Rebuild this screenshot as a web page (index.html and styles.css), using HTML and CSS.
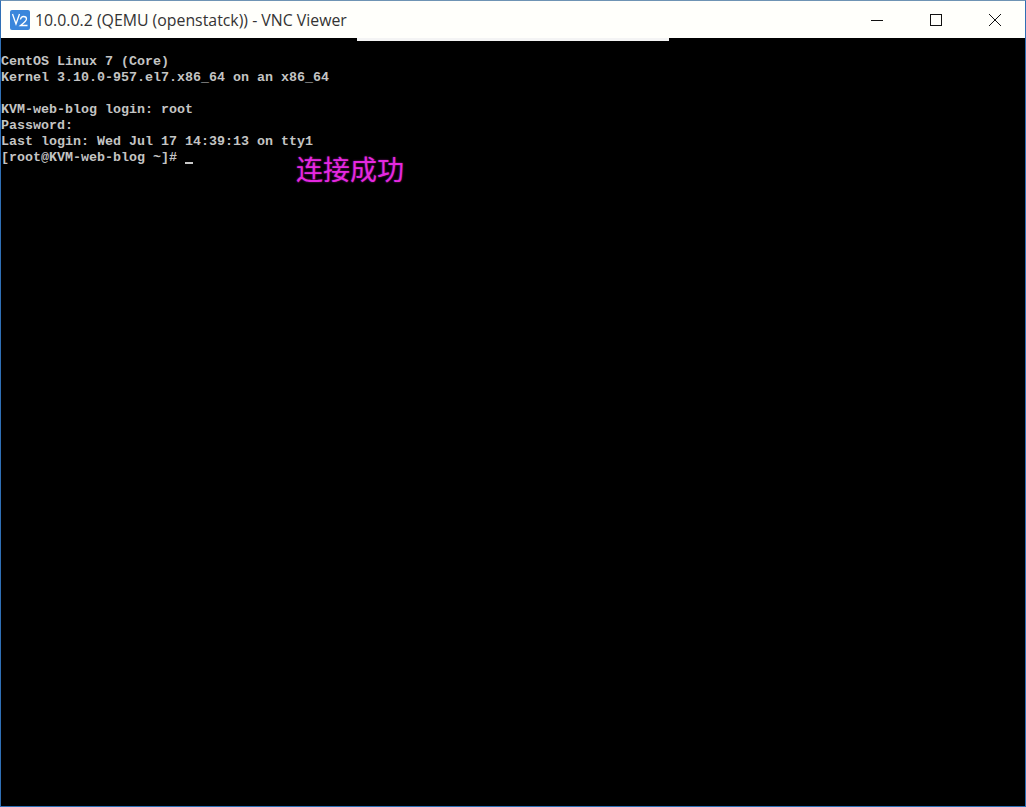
FILE: index.html
```html
<!DOCTYPE html>
<html lang="zh">
<head>
<meta charset="utf-8">
<title>VNC Viewer</title>
<link rel="stylesheet" href="styles.css">
</head>
<body>
<div class="window">
  <header class="titlebar">
    <svg class="app-icon" width="20" height="20" viewBox="0 0 20 20" aria-hidden="true">
      <rect width="20" height="20" rx="2" fill="#3a86dc"/>
      <path d="M2.5 4 L6 14 L9.5 4" fill="none" stroke="#fff" stroke-width="1.3"/>
      <path d="M10.5 9.5 Q11 6.5 13.5 6.5 Q16.5 6.5 16.5 9 Q16.5 11 10.5 15.5 H17.5" fill="none" stroke="#fff" stroke-width="1.3"/>
    </svg>
    <span class="title">10.0.0.2 (QEMU (openstatck)) - VNC Viewer</span>
    <div class="controls">
      <svg class="ctl" width="12" height="12" viewBox="0 0 12 12" aria-hidden="true"><path d="M0 6.5H12" stroke="#111" stroke-width="1"/></svg>
      <svg class="ctl" width="12" height="12" viewBox="0 0 12 12" aria-hidden="true"><rect x="0.5" y="0.5" width="11" height="11" fill="none" stroke="#111" stroke-width="1"/></svg>
      <svg class="ctl" width="14" height="14" viewBox="0 0 14 14" aria-hidden="true"><path d="M1 1L13 13M13 1L1 13" stroke="#111" stroke-width="1"/></svg>
    </div>
  </header>
  <main class="screen">
    <div class="notch"></div>
    <div class="console">
      <div class="line">CentOS Linux 7 (Core)</div>
      <div class="line">Kernel 3.10.0-957.el7.x86_64 on an x86_64</div>
      <div class="line">&nbsp;</div>
      <div class="line">KVM-web-blog login: root</div>
      <div class="line">Password:</div>
      <div class="line">Last login: Wed Jul 17 14:39:13 on tty1</div>
      <div class="line prompt">[root@KVM-web-blog ~]# <span class="cursor"></span><span class="note">连接成功</span></div>
    </div>
  </main>
</div>
</body>
</html>
```

FILE: styles.css
```css
* { box-sizing: border-box; }
html, body { margin: 0; padding: 0; height: 100%; background: #000; }
body { overflow: hidden; }
.window {
  width: 1026px;
  height: 807px;
  display: flex;
  flex-direction: column;
  border: 1px solid #2f6fb5;
  border-top-color: #6f94b4;
}
.titlebar {
  height: 37px;
  flex: none;
  display: flex;
  align-items: center;
  padding-left: 9px;
  background: #fffffb;
  font-family: "Open Sans", "Noto Sans", sans-serif;
  font-size: 15.85px;
  color: #333;
}
.app-icon { flex: none; margin-right: 5px; }
.title { white-space: nowrap; }
.controls {
  margin-left: auto;
  display: flex;
  align-items: center;
}
.ctl { display: block; }
.ctl:nth-child(1) { margin-right: 47px; }
.ctl:nth-child(2) { margin-right: 46px; }
.ctl:nth-child(3) { margin-right: 23px; }
.screen {
  flex: 1;
  position: relative;
  background: #000;
  overflow: hidden;
}
.notch {
  position: absolute;
  left: 356px;
  top: 0;
  width: 312px;
  height: 3px;
  background: #f4f4f4;
}
.console {
  padding-top: 16px;
  font-family: "Liberation Mono", "DejaVu Sans Mono", monospace;
  font-size: 13.33px;
  font-weight: 700;
  line-height: 16px;
  color: #c4c4c4;
}
.line { height: 16px; white-space: pre; }
.prompt { position: relative; }
.cursor {
  display: inline-block;
  width: 8px;
  height: 2px;
  margin-bottom: -3px;
  background: #c8c8c8;
}
.note {
  position: absolute;
  left: 295px;
  top: 4px;
  font-family: "Noto Sans CJK SC", sans-serif;
  font-size: 27px;
  font-weight: 400;
  line-height: 30px;
  color: #e528e0;
  text-shadow: 0 0 2px #8a1a88;
}
```
